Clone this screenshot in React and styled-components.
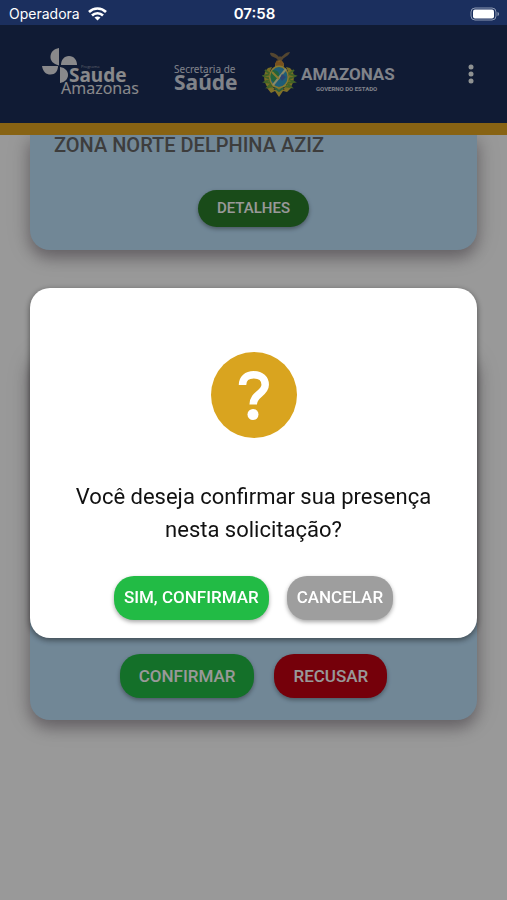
import React from "react";
import styled, { createGlobalStyle } from "styled-components";

const GlobalStyle = createGlobalStyle`
  *, *::before, *::after { box-sizing: border-box; }
  body { margin: 0; background: #fff; font-family: Roboto, sans-serif; }
`;

const Page = styled.div`
  display: flex;
  flex-direction: column;
  min-height: 100vh;
`;

const StatusBar = styled.div`
  position: relative;
  z-index: 3;
  display: grid;
  grid-template-columns: 1fr auto 1fr;
  align-items: center;
  height: 25px;
  padding: 2px 7px 0 9px;
  background: #1b2f5e;
  color: #fff;
  font: 400 14px/20px Inter, sans-serif;
`;

const Carrier = styled.span`
  display: flex;
  align-items: center;
  gap: 8px;
`;

const Clock = styled.time`
  font-size: 15px;
  font-weight: 600;
`;

const Battery = styled.svg`
  justify-self: end;
`;

const Header = styled.header`
  position: relative;
  z-index: 1;
  display: flex;
  align-items: center;
  height: 110px;
  padding: 0 20px 0 40px;
  background: #1c2e57;
  border-bottom: 12px solid #e3a520;
`;

const Logos = styled.div`
  display: flex;
  align-items: center;
  gap: 22px;
  flex: 1;
`;

const Logo = styled.svg`
  display: block;
  flex: none;
`;

const MenuButton = styled.button`
  display: grid;
  place-items: center;
  width: 32px;
  height: 40px;
  padding: 0;
  border: 0;
  background: none;
  color: #eef4f4;
`;

const Content = styled.main`
  display: flex;
  flex-direction: column;
  gap: 100px;
  padding: 0 30px;
`;

const Card = styled.section`
  display: flex;
  flex-direction: column;
  justify-content: space-between;
  gap: 32px;
  min-height: ${(p) => (p.$tall ? "370px" : "115px")};
  padding: 0 24px ${(p) => (p.$tall ? 22 : 23)}px;
  border-radius: ${(p) => (p.$tall ? "20px" : "0 0 20px 20px")};
  background: #bce1fb;
  box-shadow: 0 8px 14px rgba(60, 40, 60, 0.3), 0 4px 24px rgba(0, 0, 0, 0.2);
`;

const UnitName = styled.h2`
  margin: 0;
  color: #666;
  font-size: 20px;
  font-weight: 500;
  line-height: 20px;
`;

const Actions = styled.div`
  display: flex;
  justify-content: center;
  gap: ${(p) => p.$gap || 0}px;
  margin-top: auto;
`;

const tones = {
  dark: "#2b7d2b",
  green: "#22bb45",
  red: "#c40011",
  gray: "#9e9e9e",
};

const Button = styled.button`
  height: ${(p) => (p.$small ? 37 : 44)}px;
  padding: 0 ${(p) => (p.$compact ? 10 : 19)}px 1px;
  border: 0;
  border-radius: 20px;
  background: ${(p) => tones[p.$tone]};
  color: #fff;
  font: 500 ${(p) => (p.$small ? 15 : 17)}px/20px Roboto, sans-serif;
  white-space: nowrap;
  box-shadow: 0 2px 4px rgba(0, 0, 0, 0.35);
`;

const Overlay = styled.div`
  position: fixed;
  inset: 0;
  z-index: 2;
  display: flex;
  align-items: center;
  padding: 25px 30px 0;
  background: rgba(0, 0, 0, 0.4);
`;

const Dialog = styled.div`
  display: flex;
  flex-direction: column;
  align-items: center;
  width: 100%;
  padding: 64px 30px 18px;
  border-radius: 20px;
  background: #fff;
  box-shadow: 0 2px 6px rgba(0, 0, 0, 0.5);
`;

const Question = styled.p`
  margin: 42px 0 30px;
  color: #111;
  font-size: 22px;
  line-height: 33px;
  text-align: center;
`;

function SaudeAmazonasLogo() {
  return (
    <Logo width="110" height="60" viewBox="0 0 110 60" role="img" aria-label="Saude Amazonas" fill="#e4e4e8">
      <path d="M19 4v17.500C13 20 10 16.500 10.500 12S14 5 19 4z" />
      <path d="M37 21H21c0-5 3-9 8-9s8 4 8 9z" />
      <path d="M2 22h16c0 5-3 8.500-7.500 8.500S3 28 2 22z" />
      <path d="M20 23c5.500 1 8 4 8 8s-3 7-8 8z" />
      <text x="41" y="24" fontFamily="Open Sans, sans-serif" fontSize="4" opacity="0.6">Programa</text>
      <text x="29" y="38" fontFamily="Noto Sans, sans-serif" fontWeight="700" fontSize="19">Saude</text>
      <text x="21" y="50" fontFamily="Noto Sans, sans-serif" fontSize="16">Amazonas</text>
    </Logo>
  );
}

function SecretariaLogo() {
  return (
    <Logo width="68" height="52" viewBox="0 0 68 52" role="img" aria-label="Secretaria de Saúde" fill="#d6dae4">
      <text x="2" y="25" fontFamily="Noto Sans, sans-serif" fontSize="10">Secretaria de</text>
      <text x="2" y="42" fontFamily="Noto Sans, sans-serif" fontWeight="700" fontSize="21">Saúde</text>
    </Logo>
  );
}

function AmazonasLogo() {
  return (
    <Logo width="136" height="52" viewBox="0 0 136 52" role="img" aria-label="Amazonas, Governo do Estado">
      <path d="M8 5c4-1 7 2 9 4l1-1 1 1c3-2 5-5 9-5-1 4-6 5-7 7l-3 4-3-4c-2-2-7-2-7-6z" fill="#8c7650" />
      <path d="M6 20c-6 5-5 17 3 23l4-2C7 37 5 28 10 19zM28 20c6 5 5 17-3 23l-4-2c6-5 8-13 3-22z" fill="#c9b83c" />
      <path d="M3 22l5 4-6 2 6 3-5 3 7 1-4 4 7-1M32 22l-5 4 6 2-6 3 5 3-7 1 4 4-7-1" fill="none" stroke="#6fa542" strokeWidth="2" />
      <circle cx="17.500" cy="17" r="4.500" fill="#e0b13e" />
      <path d="M13 16l2-4 2 2 2-2 3 4-2 3h-5z" fill="#c98935" />
      <ellipse cx="17" cy="29" rx="10" ry="11.500" fill="#e5cd50" />
      <ellipse cx="17" cy="29" rx="8.500" ry="10" fill="#359bc5" />
      <path d="M11 22c5 0 7 3 6 7l-4 6c-5-2-6-9-2-13z" fill="#3aa565" />
      <path d="M24 21L11 37" stroke="#e5e4ac" strokeWidth="2" />
      <path d="M10 24l7 7" stroke="#e5cd50" strokeWidth="2" />
      <path d="M20 26l4 3-4 4-2-3z" fill="#4b71bc" />
      <path d="M5 40l8 2 4-3 5 3 8-3-5 5-4-1-4 6-4-6-4 2z" fill="#d6bd43" />
      <path d="M13 40l4 3 4-3" fill="none" stroke="#48a169" strokeWidth="2" />
      <text x="39" y="32" fill="#d6dae4" fontFamily="Roboto, sans-serif" fontWeight="700" fontSize="17">AMAZONAS</text>
      <text x="54" y="43" fill="#d6dae4" fontFamily="Roboto, sans-serif" fontWeight="700" fontSize="6">GOVERNO DO ESTADO</text>
    </Logo>
  );
}

export default function App() {
  return (
    <>
      <GlobalStyle />
      <Page>
        <StatusBar>
          <Carrier>
            Operadora
            <svg width="19" height="14" viewBox="0 0 19 14" fill="none" stroke="#fff" strokeWidth="2.600" aria-hidden="true">
              <path d="M1 5c4.700-4.600 12.300-4.600 17 0" />
              <path d="M4 8.500c3-3 8-3 11 0" />
              <path d="M6.500 10.500c2-1.500 4-1.500 6 0l-3 3z" fill="#fff" stroke="none" />
            </svg>
          </Carrier>
          <Clock>07:58</Clock>
          <Battery width="30" height="14" viewBox="0 0 30 14" aria-hidden="true">
            <rect x="1" y="1" width="25" height="12" rx="4" fill="none" stroke="#8d99b3" />
            <rect x="3" y="2.500" width="21" height="9" rx="2" fill="#fff" />
            <path d="M27.500 5c2 .500 2 3.500 0 4z" fill="#8d99b3" />
          </Battery>
        </StatusBar>
        <Header>
          <Logos>
            <SaudeAmazonasLogo />
            <SecretariaLogo />
            <AmazonasLogo />
          </Logos>
          <MenuButton aria-label="Mais opções">
            <svg width="6" height="20" viewBox="0 0 6 20" fill="currentColor" aria-hidden="true">
              <circle cx="3" cy="3" r="2.500" />
              <circle cx="3" cy="10" r="2.500" />
              <circle cx="3" cy="17" r="2.500" />
            </svg>
          </MenuButton>
        </Header>
        <Content>
          <Card>
            <UnitName>ZONA NORTE DELPHINA AZIZ</UnitName>
            <Actions>
              <Button $tone="dark" $small>DETALHES</Button>
            </Actions>
          </Card>
          <Card $tall>
            <Actions $gap={20}>
              <Button $tone="green">CONFIRMAR</Button>
              <Button $tone="red">RECUSAR</Button>
            </Actions>
          </Card>
        </Content>
      </Page>
      <Overlay>
        <Dialog role="dialog" aria-modal="true" aria-labelledby="question">
          <svg width="86" height="86" viewBox="0 0 86 86" aria-hidden="true">
            <circle cx="43" cy="43" r="43" fill="#d9a41f" />
            <path
              d="M31.500 33C31.500 26.500 36 22.800 42.700 22.800C50 22.800 54.200 27 54.200 32.800C54.200 41.500 42.200 42 42.200 52.600"
              fill="none"
              stroke="#fff"
              strokeWidth="7.500"
            />
            <circle cx="42" cy="62.500" r="5.500" fill="#fff" />
          </svg>
          <Question id="question">Você deseja confirmar sua presença nesta solicitação?</Question>
          <Actions $gap={18}>
            <Button $tone="green" $compact>SIM, CONFIRMAR</Button>
            <Button $tone="gray" $compact>CANCELAR</Button>
          </Actions>
        </Dialog>
      </Overlay>
    </>
  );
}
